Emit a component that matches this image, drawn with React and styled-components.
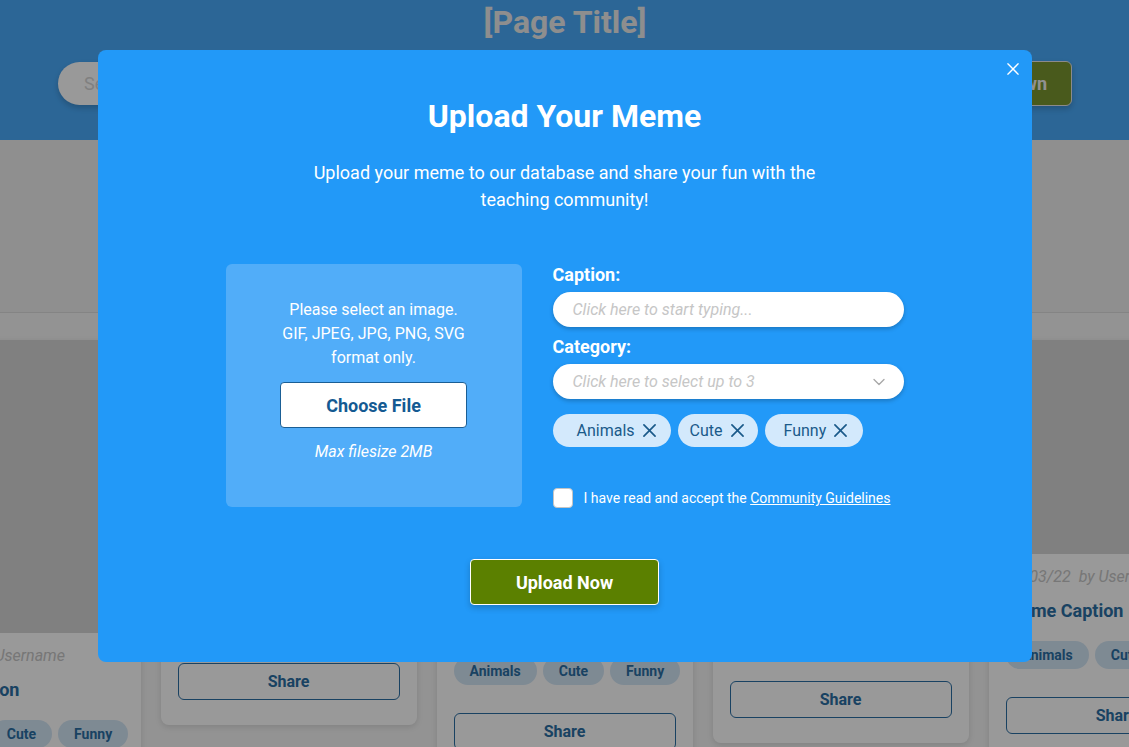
import React from 'react';
import styled, { createGlobalStyle } from 'styled-components';
import { ChevronDown } from 'lucide-react';

const GlobalStyle = createGlobalStyle`
  * { box-sizing: border-box; }
  body {
    margin: 0;
    font-family: Roboto, "Liberation Sans", sans-serif;
    background: #f5f5f5;
    overflow: hidden;
  }
`;

const Page = styled.div`
  min-height: 100vh;
  overflow: hidden;
  background: #f5f5f5;
`;

const Header = styled.header`
  height: 140px;
  padding: 3px 57px 0 58px;
  background: #4aabfb;
  display: flex;
  flex-direction: column;
  gap: 20px;
`;

const PageTitle = styled.h1`
  margin: 0;
  text-align: center;
  font-size: 32px;
  line-height: 38px;
  font-weight: 700;
  color: #ededed;
`;

const HeaderBar = styled.div`
  display: flex;
  align-items: center;
  justify-content: space-between;
`;

const SearchBox = styled.div`
  width: 380px;
  height: 43px;
  border-radius: 22px;
  background: #fff;
  padding-left: 26px;
  display: flex;
  align-items: center;
  font-size: 18px;
  color: #d6d6d6;
  box-shadow: 0 3px 6px rgba(0, 0, 0, 0.2);
`;

const OwnButton = styled.button`
  height: 45px;
  padding: 0 24px;
  border: 1px solid #e8e8e8;
  border-radius: 6px;
  background: #7b962f;
  color: #f2f2f2;
  font-family: inherit;
  font-size: 18px;
  font-weight: 700;
  box-shadow: 0 3px 6px rgba(0, 0, 0, 0.2);
`;

const FilterArea = styled.section`
  height: 173px;
  background: #eeeeee;
  border-bottom: 1px solid #dcdcdc;
`;

const Feed = styled.main`
  padding-top: 27px;
  display: flex;
  justify-content: center;
  align-items: flex-start;
  gap: 20px;
`;

const Card = styled.article`
  width: 256px;
  flex-shrink: 0;
  background: #fff;
  border-radius: 8px;
  overflow: hidden;
  box-shadow: 0 2px 6px rgba(0, 0, 0, 0.12);
`;

const CardImage = styled.div`
  height: ${(p) => p.$h}px;
  background: #d6d6d6;
`;

const CardBody = styled.div`
  padding: 12px 17px 25px;
`;

const Meta = styled.div`
  font-size: 16px;
  line-height: 22px;
  font-style: italic;
  color: #c6c6c6;
  white-space: nowrap;
  span { margin-left: 8px; }
`;

const CardCaption = styled.h3`
  margin: 11px 0 0;
  font-size: 18px;
  line-height: 24px;
  font-weight: 700;
  color: #2b6ea3;
`;

const TagRow = styled.div`
  margin-top: 18px;
  display: flex;
  gap: 6px;
`;

const Tag = styled.span`
  height: 28px;
  padding: 0 16px;
  border-radius: 14px;
  background: #d3e6f6;
  color: #2b6ea3;
  font-size: 14px;
  font-weight: 700;
  display: flex;
  align-items: center;
`;

const ShareButton = styled.button`
  margin-top: 28px;
  width: 100%;
  height: 37px;
  border: 1px solid #2b6ea3;
  border-radius: 6px;
  background: transparent;
  color: #2b6ea3;
  font-family: inherit;
  font-size: 16px;
  font-weight: 700;
`;

const Overlay = styled.div`
  position: fixed;
  inset: 0;
  background: rgba(0, 0, 0, 0.4);
  display: flex;
  justify-content: center;
  align-items: flex-start;
  padding-top: 50px;
`;

const Modal = styled.div`
  position: relative;
  width: 934px;
  padding: 47px 0 57px;
  border-radius: 8px;
  background: #2299f8;
  color: #fff;
  display: flex;
  flex-direction: column;
  align-items: center;
`;

const CloseButton = styled.button`
  position: absolute;
  top: 11px;
  right: 11px;
  width: 16px;
  height: 16px;
  padding: 0;
  border: none;
  background: none;
  display: flex;
  align-items: center;
  justify-content: center;
`;

const ModalTitle = styled.h2`
  margin: 0;
  font-size: 32px;
  line-height: 38px;
  font-weight: 700;
`;

const Intro = styled.p`
  margin: 24px 0 0;
  max-width: 530px;
  text-align: center;
  font-size: 18px;
  line-height: 27px;
`;

const FormRow = styled.div`
  margin-top: 51px;
  display: flex;
  gap: 31px;
`;

const DropBox = styled.div`
  width: 296px;
  height: 243px;
  padding-top: 34px;
  border-radius: 6px;
  background: #51adf9;
  display: flex;
  flex-direction: column;
  align-items: center;
  gap: 12px;
`;

const DropText = styled.p`
  margin: 0;
  text-align: center;
  font-size: 16px;
  line-height: 24px;
  font-style: ${(p) => (p.$italic ? 'italic' : 'normal')};
`;

const ChooseButton = styled.button`
  width: 187px;
  height: 46px;
  border: 1px solid #1a5e95;
  border-radius: 4px;
  background: #fff;
  color: #145a92;
  font-family: inherit;
  font-size: 18px;
  font-weight: 700;
`;

const Fields = styled.div`
  width: 351px;
  display: flex;
  flex-direction: column;
`;

const Label = styled.label`
  font-size: 18px;
  line-height: 21px;
  font-weight: 700;
  margin-top: ${(p) => p.$top || 0}px;
`;

const TextField = styled.div`
  height: 35px;
  margin-top: ${(p) => p.$top}px;
  padding: 0 15px 0 20px;
  border-radius: 18px;
  background: #fff;
  box-shadow: 0 2px 4px rgba(0, 0, 0, 0.22);
  display: flex;
  align-items: center;
  justify-content: space-between;
  font-size: 16px;
  font-style: italic;
  color: #c6c6c6;
`;

const Chips = styled.div`
  margin-top: 15px;
  display: flex;
  gap: 7px;
`;

const Chip = styled.span`
  height: 33px;
  padding: 0 ${(p) => p.$right}px 0 ${(p) => p.$left}px;
  border-radius: 17px;
  background: #d3e9fc;
  color: #1a5a8a;
  font-size: 16px;
  display: flex;
  align-items: center;
  gap: 8px;
`;

const Agree = styled.label`
  margin-top: 41px;
  display: flex;
  align-items: center;
  gap: 11px;
  font-size: 14px;

  a {
    color: #fff;
    text-decoration: underline;
  }
`;

const CheckBox = styled.span`
  width: 20px;
  height: 20px;
  border: 1px solid #c4c4c4;
  border-radius: 4px;
  background: #fff;
`;

const UploadButton = styled.button`
  margin-top: 51px;
  width: 189px;
  height: 46px;
  border: 1px solid #fff;
  border-radius: 4px;
  background: #5b8000;
  color: #fff;
  font-family: inherit;
  font-size: 18px;
  font-weight: 700;
  box-shadow: 0 3px 6px rgba(0, 0, 0, 0.2);
`;

const Cross = ({ size, color, width }) => (
  <svg width={size} height={size} viewBox="0 0 14 14" fill="none">
    <path d="M1 1L13 13M13 1L1 13" stroke={color} strokeWidth={width} strokeLinecap="round" />
  </svg>
);

const cards = [
  { h: 293 },
  { h: 180 },
  { h: 230 },
  { h: 198 },
  { h: 214 },
];

const chips = [
  { label: 'Animals', left: 24, right: 15 },
  { label: 'Cute', left: 12, right: 14 },
  { label: 'Funny', left: 19, right: 16 },
];

export default function App() {
  return (
    <Page>
      <GlobalStyle />
      <Header>
        <PageTitle>[Page Title]</PageTitle>
        <HeaderBar>
          <SearchBox>Search memes...</SearchBox>
          <OwnButton>Upload Your Own</OwnButton>
        </HeaderBar>
      </Header>
      <FilterArea />
      <Feed>
        {cards.map((c, i) => (
          <Card key={i}>
            <CardImage $h={c.h} />
            <CardBody>
              <Meta>
                01/03/22<span>by Username</span>
              </Meta>
              <CardCaption>Meme Caption</CardCaption>
              <TagRow>
                <Tag>Animals</Tag>
                <Tag>Cute</Tag>
                <Tag>Funny</Tag>
              </TagRow>
              <ShareButton>Share</ShareButton>
            </CardBody>
          </Card>
        ))}
      </Feed>

      <Overlay>
        <Modal>
          <CloseButton aria-label="Close">
            <Cross size={12} color="#fff" width={1.6} />
          </CloseButton>
          <ModalTitle>Upload Your Meme</ModalTitle>
          <Intro>
            Upload your meme to our database and share your fun with the teaching community!
          </Intro>
          <FormRow>
            <DropBox>
              <DropText>
                Please select an image.
                <br />
                GIF, JPEG, JPG, PNG, SVG
                <br />
                format only.
              </DropText>
              <ChooseButton>Choose File</ChooseButton>
              <DropText $italic>Max filesize 2MB</DropText>
            </DropBox>
            <Fields>
              <Label>Caption:</Label>
              <TextField $top={7}>Click here to start typing...</TextField>
              <Label $top={9}>Category:</Label>
              <TextField $top={7}>
                Click here to select up to 3
                <ChevronDown size={20} strokeWidth={1.6} color="#a8a8a8" />
              </TextField>
              <Chips>
                {chips.map((c) => (
                  <Chip key={c.label} $left={c.left} $right={c.right}>
                    {c.label} <Cross size={13} color="#1a5a8a" width={1.8} />
                  </Chip>
                ))}
              </Chips>
              <Agree>
                <CheckBox />
                <span>
                  I have read and accept the <a href="#guidelines">Community Guidelines</a>
                </span>
              </Agree>
            </Fields>
          </FormRow>
          <UploadButton>Upload Now</UploadButton>
        </Modal>
      </Overlay>
    </Page>
  );
}
